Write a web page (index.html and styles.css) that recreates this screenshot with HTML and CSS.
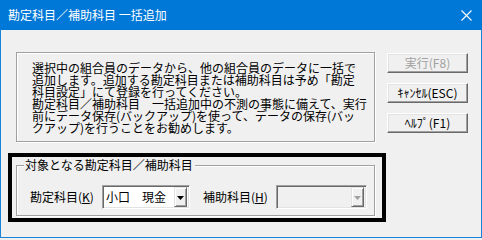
FILE: index.html
```html
<!DOCTYPE html>
<html lang="ja">
<head>
<meta charset="utf-8">
<title>勘定科目／補助科目 一括追加</title>
<link rel="stylesheet" href="styles.css">
</head>
<body>
<div class="window">
  <div class="titlebar">
    <span class="title">勘定科目／補助科目 一括追加</span>
    <svg class="close" width="11" height="11" viewBox="0 0 11 11"><path d="M0.5 0.5L10.5 10.5M10.5 0.5L0.5 10.5" stroke="#fff" stroke-width="1.1" fill="none"/></svg>
  </div>
  <div class="content">
    <div class="main">
      <div class="notice">
        <div class="line">選択中の組合員のデータから、他の組合員のデータに一括で</div>
        <div class="line">追加します。追加する勘定科目または補助科目は予め「勘定</div>
        <div class="line">科目設定」にて登録を行ってください。</div>
        <div class="line">勘定科目／補助科目　一括追加中の不測の事態に備えて、実行</div>
        <div class="line">前にデータ保存(バックアップ)を使って、データの保存(バッ</div>
        <div class="line">クアップ)を行うことをお勧めします。</div>
      </div>
      <div class="highlight">
        <div class="group">
          <div class="caption">対象となる勘定科目／補助科目</div>
          <div class="row">
            <span class="label label-k">勘定科目(<u>K</u>)</span>
            <div class="combo combo-k">
              <span class="value">小口　現金</span>
              <span class="drop"><svg width="7" height="4" viewBox="0 0 7 4"><path d="M0 0H7L3.5 4Z" fill="#000"/></svg></span>
            </div>
            <span class="label label-h">補助科目(<u>H</u>)</span>
            <div class="combo combo-h disabled">
              <span class="value"></span>
              <span class="drop"><svg width="7" height="4" viewBox="0 0 7 4"><path d="M0 0H7L3.5 4Z" fill="#a0a0a0"/></svg></span>
            </div>
          </div>
        </div>
      </div>
    </div>
    <div class="buttons">
      <div class="btn btn-disabled">実行(F8)</div>
      <div class="btn">ｷｬﾝｾﾙ(ESC)</div>
      <div class="btn">ﾍﾙﾌﾟ(F1)</div>
    </div>
  </div>
</div>
</body>
</html>
```

FILE: styles.css
```css
html, body {
  margin: 0;
  padding: 0;
}

body {
  width: 482px;
  height: 238px;
  overflow: hidden;
  background: #f0f0f0;
  font-family: "Noto Sans CJK JP", "Noto Sans", sans-serif;
  font-size: 12px;
  color: #000;
}

.window {
  box-sizing: border-box;
  width: 482px;
  height: 238px;
  border: 1px solid #1883d7;
  border-top: 0;
  background: #f0f0f0;
  display: flex;
  flex-direction: column;
}

.titlebar {
  height: 30px;
  flex: none;
  background: #0078d7;
  color: #fff;
  display: flex;
  align-items: center;
  justify-content: space-between;
  padding: 0 10px 0 8px;
  margin: 0 -1px;
}

.title {
  font-size: 12px;
  line-height: 14px;
  white-space: nowrap;
}

.close {
  display: block;
}

.content {
  display: flex;
  align-items: flex-start;
  padding-top: 22px;
}

.main {
  padding-left: 7px;
  width: 378px;
  flex: none;
}

.notice {
  box-sizing: border-box;
  margin-left: 8px;
  width: 359px;
  height: 90px;
  border: 1px solid #a0a0a0;
  box-shadow: 1px 1px 0 #fff, inset 1px 1px 0 #fff;
  padding: 9px 0 0 15px;
  line-height: 12px;
}

.line {
  white-space: nowrap;
}

.highlight {
  box-sizing: border-box;
  margin-top: 11px;
  width: 378px;
  border: 4px solid #000;
  padding: 8px 0 2px 4px;
}

.group {
  box-sizing: border-box;
  width: 359px;
  border: 1px solid #a0a0a0;
  box-shadow: 1px 1px 0 #fff, inset 1px 1px 0 #fff;
  padding-bottom: 6px;
}

.caption {
  width: fit-content;
  margin: -8px 0 0 7px;
  padding: 0 2px 0 1px;
  background: #f0f0f0;
  line-height: 14px;
  white-space: nowrap;
}

.row {
  display: flex;
  align-items: center;
  margin-top: 13px;
  padding-left: 13px;
  height: 24px;
}

.label {
  flex: none;
  white-space: nowrap;
  line-height: 14px;
}

.label u {
  text-underline-offset: 1px;
}

.label-k {
  width: 72px;
}

.label-h {
  width: 73px;
  margin-left: 13px;
}

.combo {
  box-sizing: border-box;
  flex: none;
  height: 24px;
  display: flex;
  align-items: center;
  justify-content: space-between;
  background: #fff;
  border-top: 1px solid #a0a0a0;
  border-left: 1px solid #a0a0a0;
  border-bottom: 1px solid #fff;
  border-right: 1px solid #fff;
  box-shadow: inset 1px 1px 0 #696969, inset -1px -1px 0 #e3e3e3;
  padding: 2px;
}

.combo-k {
  width: 88px;
}

.combo-h {
  width: 91px;
}

.combo.disabled {
  background: #f0f0f0;
}

.value {
  padding-left: 1px;
  line-height: 14px;
  white-space: nowrap;
}

.drop {
  box-sizing: border-box;
  width: 13px;
  height: 20px;
  background: #f0f0f0;
  border-top: 1px solid #e3e3e3;
  border-left: 1px solid #e3e3e3;
  border-right: 1px solid #696969;
  border-bottom: 1px solid #696969;
  box-shadow: inset 1px 1px 0 #fff, inset -1px -1px 0 #a0a0a0;
  display: flex;
  align-items: center;
  justify-content: center;
}

.drop svg {
  display: block;
  margin-top: 1px;
}

.buttons {
  flex: none;
  margin-left: 1px;
  padding-top: 1px;
  display: flex;
  flex-direction: column;
  gap: 10px;
}

.btn {
  box-sizing: border-box;
  width: 81px;
  height: 20px;
  background: #f0f0f0;
  border-top: 1px solid #fff;
  border-left: 1px solid #fff;
  border-right: 1px solid #696969;
  border-bottom: 1px solid #696969;
  box-shadow: inset -1px -1px 0 #a0a0a0, inset 1px 1px 0 #e3e3e3;
  display: flex;
  align-items: center;
  justify-content: center;
  line-height: 14px;
  white-space: nowrap;
}

.btn-disabled {
  color: #a0a0a0;
}
```
